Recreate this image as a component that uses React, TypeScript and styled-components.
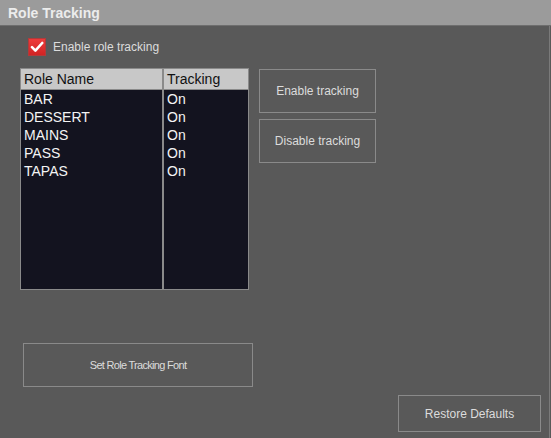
import React from 'react';
import styled, { createGlobalStyle } from 'styled-components';

const Global = createGlobalStyle`
  html, body {
    margin: 0;
    padding: 0;
    background: #595959;
  }
  body {
    font-family: "Liberation Sans", Arial, sans-serif;
  }
`;

const Window = styled.div`
  width: 551px;
  height: 438px;
  display: flex;
  flex-direction: column;
  background: #595959;
  overflow: hidden;
`;

const TitleBar = styled.div`
  height: 26px;
  flex: none;
  background: #9b9b9b;
  border-bottom: 1px solid #6e6e6e;
  box-sizing: border-box;
  padding-left: 8px;
  display: flex;
  align-items: center;
  color: #ececec;
  font-weight: bold;
  font-size: 14px;
`;

const Body = styled.div`
  flex: 1;
  display: flex;
  flex-direction: column;
  width: 550px;
  box-sizing: border-box;
  border-right: 1px solid #7a7a7a;
  padding: 12px 8px 7px 20px;
`;

const CheckRow = styled.label`
  display: flex;
  align-items: center;
  gap: 7px;
  margin-left: 8px;
  color: #dcdcdc;
  font-size: 12px;
`;

const CheckBox = styled.span`
  width: 18px;
  height: 18px;
  box-sizing: border-box;
  border: 1px solid #b23a3a;
  background: linear-gradient(#ee3b3b, #d02424);
  display: flex;
  align-items: center;
  justify-content: center;
`;

const MainRow = styled.div`
  display: flex;
  align-items: flex-start;
  gap: 10px;
  margin-top: 12px;
`;

const Table = styled.div`
  width: 229px;
  height: 222px;
  box-sizing: border-box;
  border: 1px solid #8a8a8a;
  background: #13131f;
  display: grid;
  grid-template-columns: 143px 1fr;
  grid-template-rows: 21px 1fr;
`;

const HeadCell = styled.div<{ $last?: boolean }>`
  background: #c8c8c8;
  color: #111;
  font-size: 14px;
  padding-left: 3px;
  line-height: 20px;
  border-right: ${p => (p.$last ? 'none' : '2px solid #8a8a8a')};
  border-bottom: 1px solid #8a8a8a;
`;

const Column = styled.div<{ $last?: boolean }>`
  display: flex;
  flex-direction: column;
  padding-left: 3px;
  border-right: ${p => (p.$last ? 'none' : '2px solid #8a8a8a')};
  color: #f4f4f4;
  font-size: 14px;
`;

const Cell = styled.div`
  height: 18px;
  line-height: 18px;
`;

const ButtonColumn = styled.div`
  display: flex;
  flex-direction: column;
  gap: 6px;
  margin-top: 1px;
`;

const Button = styled.button<{ $w: number; $h: number; $narrow?: boolean }>`
  width: ${p => p.$w}px;
  height: ${p => p.$h}px;
  background: transparent;
  border: 1px solid #8a8a8a;
  color: #dcdcdc;
  font-family: "Liberation Sans", Arial, sans-serif;
  font-size: ${p => (p.$narrow ? '11px' : '12px')};
  letter-spacing: ${p => (p.$narrow ? '-0.7px' : 'normal')};
  padding: 0;
  cursor: pointer;
`;

const FontRow = styled.div`
  margin-top: 53px;
  margin-left: 3px;
`;

const FooterRow = styled.div`
  margin-top: 8px;
  display: flex;
  justify-content: flex-end;
`;

const roles = ['BAR', 'DESSERT', 'MAINS', 'PASS', 'TAPAS'];

export default function App() {
  return (
    <Window>
      <Global />
      <TitleBar>Role Tracking</TitleBar>
      <Body>
        <CheckRow>
          <CheckBox>
            <svg width="14" height="12" viewBox="0 0 14 12">
              <path d="M2 6.2 L5.4 9.6 L12.2 2" fill="none" stroke="#fff" strokeWidth="2.6" strokeLinecap="round" strokeLinejoin="round" />
            </svg>
          </CheckBox>
          Enable role tracking
        </CheckRow>
        <MainRow>
          <Table>
            <HeadCell>Role Name</HeadCell>
            <HeadCell $last>Tracking</HeadCell>
            <Column>
              {roles.map(r => (
                <Cell key={r}>{r}</Cell>
              ))}
            </Column>
            <Column $last>
              {roles.map(r => (
                <Cell key={r}>On</Cell>
              ))}
            </Column>
          </Table>
          <ButtonColumn>
            <Button $w={117} $h={44}>Enable tracking</Button>
            <Button $w={117} $h={44}>Disable tracking</Button>
          </ButtonColumn>
        </MainRow>
        <FontRow>
          <Button $w={230} $h={44} $narrow>Set Role Tracking Font</Button>
        </FontRow>
        <FooterRow>
          <Button $w={143} $h={37}>Restore Defaults</Button>
        </FooterRow>
      </Body>
    </Window>
  );
}
